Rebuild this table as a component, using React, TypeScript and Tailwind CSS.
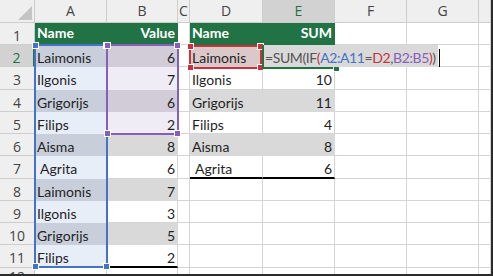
import React from 'react'

type Fill = 'white' | 'gray' | 'green' | 'blueDark' | 'blueLight' | 'purpleDark' | 'purpleLight' | 'red'

const FILL: Record<Fill, string> = {
  white: 'bg-white border-[#d4d4d4]',
  gray: 'bg-[#d9d9d9] border-[#d9d9d9]',
  green: 'bg-[#217346] border-[#217346]',
  blueDark: 'bg-[#c8cfdb] border-[#c8cfdb]',
  blueLight: 'bg-[#e8eef8] border-[#e8eef8]',
  purpleDark: 'bg-[#d1ccd8] border-[#d1ccd8]',
  purpleLight: 'bg-[#efecf5] border-[#efecf5]',
  red: 'bg-[#dbc8c9] border-[#dbc8c9]',
}

// columns A..H
const COLS = ['A', 'B', 'C', 'D', 'E', 'F', 'G', '']
const WIDTHS = ['w-[72px]', 'w-[71px]', 'w-[12px]', 'w-[73px]', 'w-[72px]', 'w-[72px]', 'w-[72px]', 'w-[12px]']
// rows 1..11
const HEIGHTS = ['h-[22px]', 'h-[22px]', 'h-[23px]', 'h-[22px]', 'h-[22px]', 'h-[22px]', 'h-[23px]', 'h-[22px]', 'h-[22px]', 'h-[22px]', 'h-[23px]']

const names = ['Laimonis', 'Ilgonis', 'Grigorijs', 'Filips', 'Aisma', ' Agrita', 'Laimonis', 'Ilgonis', 'Grigorijs', 'Filips']
const values = [6, 7, 6, 2, 8, 6, 7, 3, 5, 2]
const lookup: [string, number | null][] = [
  ['Laimonis', null],
  ['Ilgonis', 10],
  ['Grigorijs', 11],
  ['Filips', 4],
  ['Aisma', 8],
  [' Agrita', 6],
]

const getFill = (r: number, c: number): Fill => {
  const even = r % 2 === 0
  if (r === 1) return c === 0 || c === 1 || c === 3 || c === 4 ? 'green' : 'white'
  if (c === 0) return even ? 'blueDark' : 'blueLight'
  if (c === 1) {
    if (r <= 5) return even ? 'purpleDark' : 'purpleLight'
    return even ? 'gray' : 'white'
  }
  if (c === 3 && r === 2) return 'red'
  if ((c === 3 || c === 4) && r <= 7) return even ? 'gray' : 'white'
  return 'white'
}

const getText = (r: number, c: number): { text: string; right?: boolean } | null => {
  if (r === 1) {
    if (c === 0) return { text: 'Name' }
    if (c === 1) return { text: 'Value', right: true }
    if (c === 3) return { text: 'Name' }
    if (c === 4) return { text: 'SUM', right: true }
    return null
  }
  if (c === 0) return { text: names[r - 2] }
  if (c === 1) return { text: String(values[r - 2]), right: true }
  if (r <= 7) {
    const [name, val] = lookup[r - 2]
    if (c === 3) return { text: name }
    if (c === 4 && val !== null) return { text: String(val), right: true }
  }
  return null
}

const hasThickBottom = (r: number, c: number) => (r === 11 && c === 1) || (r === 7 && (c === 3 || c === 4))

// coloured outline Excel draws round a range that a formula refers to
const RangeBox = ({ className, color }: { className: string; color: string }) => (
  <div className={`absolute border-2 ${className}`}>
    <span className={`absolute -left-[4px] -top-[4px] w-[7px] h-[7px] border border-white ${color}`} />
    <span className={`absolute -right-[4px] -top-[4px] w-[7px] h-[7px] border border-white ${color}`} />
    <span className={`absolute -left-[4px] -bottom-[4px] w-[7px] h-[7px] border border-white ${color}`} />
    <span className={`absolute -right-[4px] -bottom-[4px] w-[7px] h-[7px] border border-white ${color}`} />
  </div>
)

const App = () => {
  return (
    <div className="relative w-[493px] h-[276px] overflow-hidden bg-white border-r-2 border-b-2 border-[#2b2b2b] font-['Lato','Liberation_Sans',sans-serif] text-[14px] text-[#1f1f1f]">
      {/* column headers */}
      <div className="flex h-[23px] font-['Open_Sans',sans-serif] text-[14px] text-[#444]">
        <div className="w-[35px] shrink-0 bg-[#efefef] border-r border-b border-[#cdcdcd]">
          <svg width="34" height="22" className="block">
            <polygon points="32,6 32,20 18,20" fill="#c4c4c4" />
          </svg>
        </div>
        {COLS.map((col, c) => (
          <div
            key={c}
            className={`${WIDTHS[c]} shrink-0 border-r border-b border-[#cdcdcd] text-center leading-[22px] ${c === 4 ? 'bg-[#d2d2d2] text-[#217346]' : 'bg-[#efefef]'}`}
          >
            {col}
          </div>
        ))}
      </div>

      {/* body rows */}
      {HEIGHTS.map((h, i) => {
        const r = i + 1
        return (
          <div key={r} className={`flex ${h}`}>
            <div
              className={`w-[35px] shrink-0 flex justify-center pt-[4px] leading-[18px] border-b border-[#cdcdcd] font-['Open_Sans',sans-serif] ${r === 2 ? 'bg-[#d2d2d2] text-[#217346] border-r-2 border-r-[#217346]' : 'bg-[#efefef] text-[#444] border-r'}`}
            >
              {r}
            </div>
            {COLS.map((_, c) => {
              const t = getText(r, c)
              const fill = FILL[getFill(r, c)]
              const bottom = hasThickBottom(r, c) ? 'border-b-2 border-b-black' : 'border-b'
              return (
                <div
                  key={c}
                  className={`${WIDTHS[c]} shrink-0 border-r ${bottom} ${fill} whitespace-pre leading-[18px] ${r === 1 ? 'pt-[1px] font-bold text-white' : 'pt-[4px]'} ${t?.right ? 'text-right pr-[2px]' : 'pl-[2px]'}`}
                >
                  {t?.text}
                </div>
              )
            })}
          </div>
        )
      })}

      {/* row 12, cut off by the window */}
      <div className="flex h-[6px]">
        <div className="w-[35px] shrink-0 flex justify-center leading-[18px] bg-[#efefef] border-r border-[#cdcdcd] text-[#444] font-['Open_Sans',sans-serif] overflow-hidden">
          12
        </div>
        {WIDTHS.map((w, c) => (
          <div key={c} className={`${w} shrink-0 border-r border-[#d4d4d4]`} />
        ))}
      </div>

      {/* range finders */}
      <RangeBox className="left-[34px] top-[44px] w-[74px] h-[224px] border-[#4472c4]" color="bg-[#4472c4]" />
      <RangeBox className="left-[106px] top-[44px] w-[73px] h-[91px] border-[#8560b8]" color="bg-[#8560b8]" />
      <RangeBox className="left-[189px] top-[45px] w-[73px] h-[24px] border-[#c8323c]" color="bg-[#c8323c]" />

      {/* active cell E2 with fill handle */}
      <div className="absolute left-[262px] top-[45px] w-[74px] h-[24px] border-l-2 border-b-2 border-[#217346]">
        <span className="absolute -right-[4px] -bottom-[5px] w-[7px] h-[7px] border border-white bg-[#217346]" />
      </div>

      {/* in-cell editor */}
      <div className="absolute left-[264px] top-[45px] w-[174px] h-[22px] bg-[#d9d9d9] pl-[1px] pt-[4px] leading-[18px] whitespace-nowrap tracking-[-0.4px] text-[#555]">
        =SUM(IF<span className="text-[#c8323c]">(</span>
        <span className="text-[#4472c4]">A2:A11</span>=<span className="text-[#c8323c]">D2</span>,
        <span className="text-[#8560b8]">B2:B5</span>
        <span className="text-[#c8323c]">)</span>)
        <span className="inline-block w-px h-[18px] bg-black ml-[3px] align-[-4px]" />
      </div>
    </div>
  )
}

export default App
